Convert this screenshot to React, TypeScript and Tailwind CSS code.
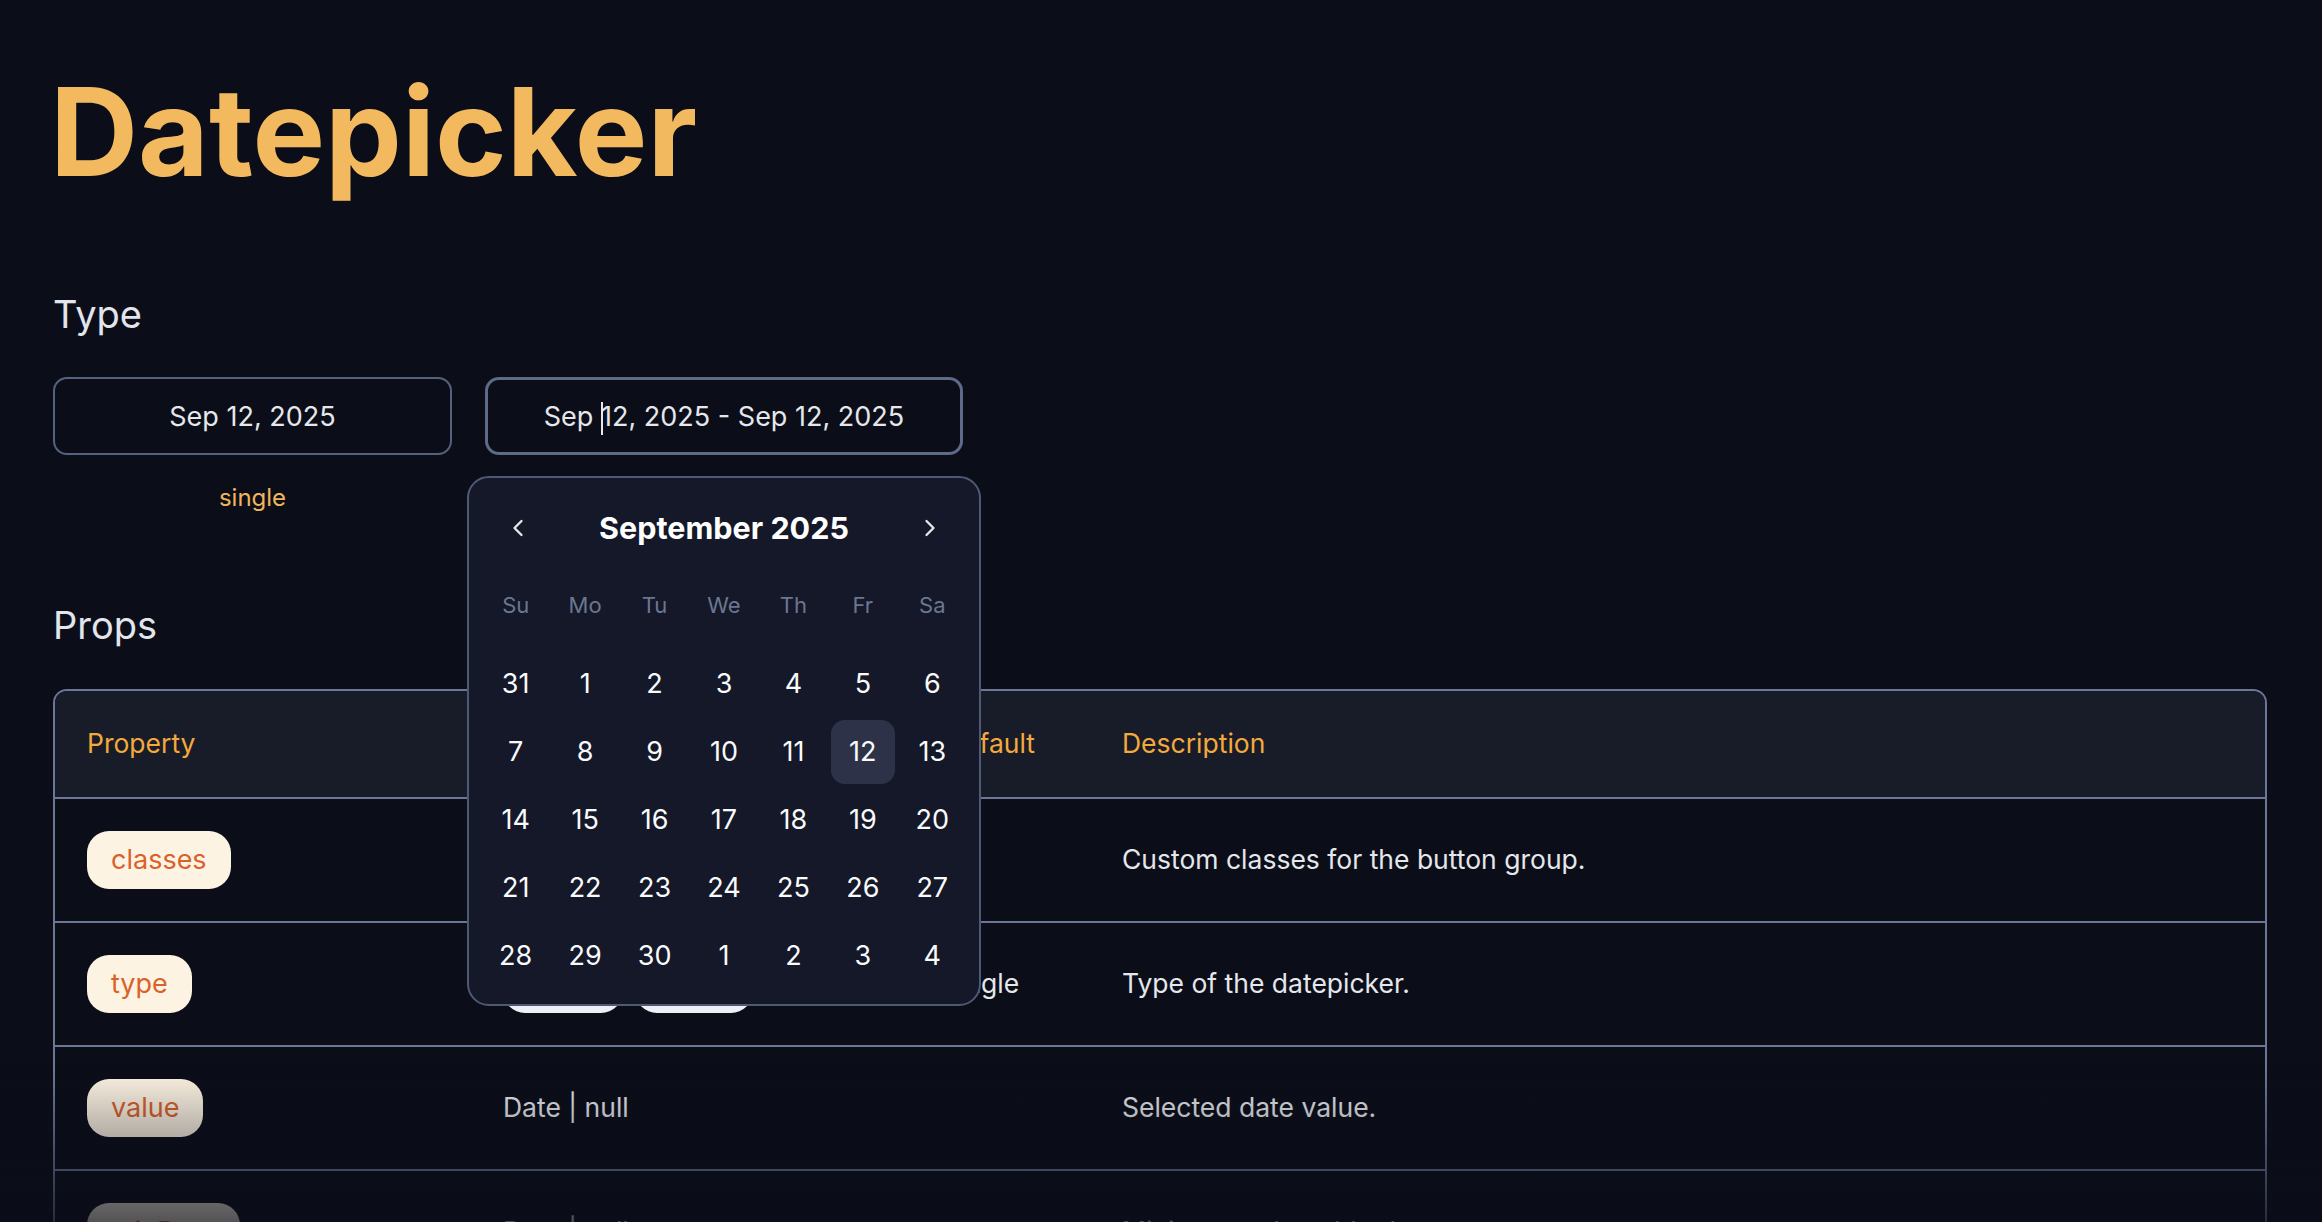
import { ChevronLeft, ChevronRight } from "lucide-react"

const weekdays = ["Su", "Mo", "Tu", "We", "Th", "Fr", "Sa"]

const days = [
  31, 1, 2, 3, 4, 5, 6,
  7, 8, 9, 10, 11, 12, 13,
  14, 15, 16, 17, 18, 19, 20,
  21, 22, 23, 24, 25, 26, 27,
  28, 29, 30, 1, 2, 3, 4,
]

function Calendar() {
  return (
    <div className="absolute top-full left-1/2 -translate-x-1/2 mt-[21px] z-10 w-[514px] rounded-[22px] border-2 border-[#4e5a74] bg-[#141828] px-[12px] pt-[20px] pb-[16px]">
      {/* month header */}
      <div className="h-[60px] flex items-center justify-between px-[23px]">
        <ChevronLeft size={28} strokeWidth={2} className="text-[#e5e7eb]" />
        <span className="text-[30.5px] font-bold text-white leading-none">September 2025</span>
        <ChevronRight size={28} strokeWidth={2} className="text-[#e5e7eb]" />
      </div>
      {/* weekdays */}
      <div className="mt-[23px] grid grid-cols-7 h-[48px] items-center">
        {weekdays.map((d) => (
          <span key={d} className="text-center text-[22px] text-[#6b7691]">{d}</span>
        ))}
      </div>
      {/* days */}
      <div className="mt-[23px] grid grid-cols-7 gap-y-[4px]">
        {days.map((d, i) => (
          <div key={i} className="flex justify-center">
            <div
              className={
                i === 12
                  ? "w-[64px] h-[64px] rounded-[14px] bg-[#2e3249] flex items-center justify-center text-[27px] text-[#f9fafb]"
                  : "w-[64px] h-[64px] rounded-[14px] flex items-center justify-center text-[27px] text-[#f9fafb]"
              }
            >
              {d}
            </div>
          </div>
        ))}
      </div>
    </div>
  )
}

function Badge({ children }: { children: string }) {
  return (
    <span className="inline-flex items-center h-[58px] px-[24px] rounded-[22px] bg-[#fdf3e3] text-[#d9622b] text-[27px]">
      {children}
    </span>
  )
}

const rows = [
  { name: "classes", type: "string", def: "", desc: "Custom classes for the button group." },
  { name: "type", type: "badges", def: "single", desc: "Type of the datepicker." },
  { name: "value", type: "Date | null", def: "", desc: "Selected date value." },
  { name: "minDate", type: "Date | null", def: "", desc: "Minimum selectable date." },
  { name: "maxDate", type: "Date | null", def: "", desc: "Maximum selectable date." },
]

export default function App() {
  return (
    <div className="min-h-screen bg-[#0b0e19] font-['Inter',sans-serif] pl-[53px] pr-[55px] pt-[71px] pb-[60px]">
      <h1 className="text-[122px] leading-none font-bold text-[#f3b95f] -ml-[3px]">Datepicker</h1>

      <h2 className="mt-[102px] text-[38px] leading-none text-[#e2e5ec]">Type</h2>

      <div className="mt-[44px] flex items-start gap-[33px]">
        {/* single */}
        <div className="w-[399px] flex flex-col items-center">
          <div className="w-full h-[78px] rounded-[14px] border-2 border-[#55627d] flex items-center justify-center pt-[2px] text-[27px] text-[#e5e7eb]">
            Sep 12, 2025
          </div>
          <div className="mt-[31px] text-[24px] leading-none text-[#f0b55b]">single</div>
        </div>
        {/* range, focused with popup */}
        <div className="relative w-[478px]">
          <div className="h-[78px] rounded-[14px] border-[3px] border-[#5d6a88] flex items-center justify-center pt-[2px] text-[27px] text-[#e5e7eb]">
            <span>
              Sep <span className="inline-block w-[2px] -mr-[2px] h-[33px] bg-[#e5e7eb] align-middle" />12, 2025 - Sep 12, 2025
            </span>
          </div>
          <Calendar />
        </div>
      </div>

      <h2 className="mt-[96px] text-[38px] leading-none text-[#e2e5ec]">Props</h2>

      <div className="mt-[45px] rounded-[14px] border-2 border-[#6b7794] overflow-hidden">
        <div className="grid grid-cols-[416px_442px_177px_1fr] h-[108px] items-center bg-[#181c28] border-b-2 border-[#6b7794] text-[26.5px] text-[#f4a93e]">
          <div className="px-[32px]">Property</div>
          <div className="px-[32px]">Type</div>
          <div className="px-[32px]">Default</div>
          <div className="px-[32px]">Description</div>
        </div>
        {rows.map((r) => (
          <div key={r.name} className="grid grid-cols-[416px_442px_177px_1fr] h-[124px] items-center border-b-2 border-[#6b7794] text-[26.5px] text-[#e5e7eb]">
            <div className="px-[32px]">
              <Badge>{r.name}</Badge>
            </div>
            <div className="px-[32px]">
              {r.type === "badges" ? (
                <div className="flex gap-[12px]">
                  <span className="inline-flex items-center justify-center w-[120px] h-[58px] rounded-[22px] bg-[#eef0f5] text-[#1f2937] text-[24px]">single</span>
                  <span className="inline-flex items-center justify-center w-[118px] h-[58px] rounded-[22px] bg-[#eef0f5] text-[#1f2937] text-[24px]">range</span>
                </div>
              ) : (
                r.type
              )}
            </div>
            <div className="px-[32px]">{r.def}</div>
            <div className="px-[32px]">{r.desc}</div>
          </div>
        ))}
      </div>

      {/* bottom fade */}
      <div className="fixed left-0 right-0 bottom-0 h-[152px] pointer-events-none bg-linear-to-b from-[#0b0e1900] to-[#0b0e19b3]" />
    </div>
  )
}
